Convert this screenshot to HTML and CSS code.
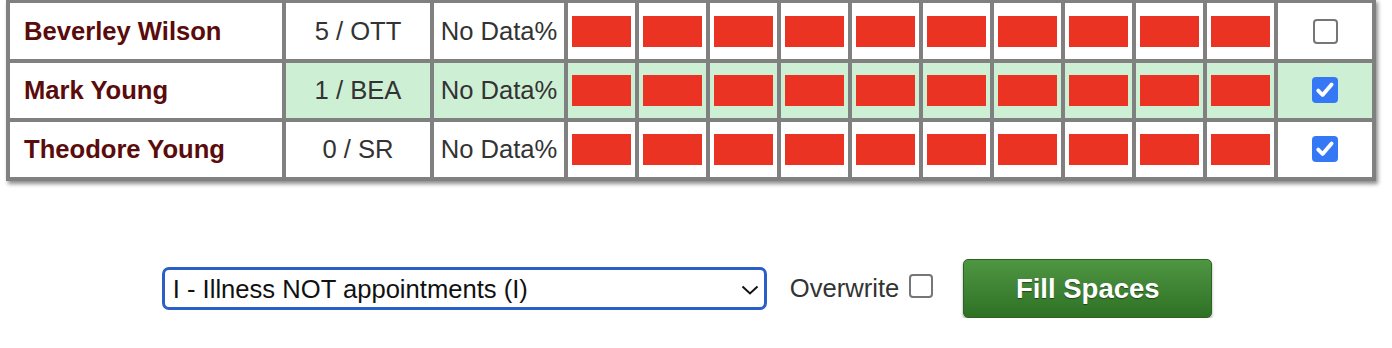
FILE: index.html
```html
<!DOCTYPE html>
<html>
<head>
<meta charset="utf-8">
<link rel="stylesheet" href="styles.css">
</head>
<body>
<div class="wrap">
<table class="grid">
  <colgroup>
    <col class="c-name"><col class="c-code"><col class="c-pct">
    <col class="c-day"><col class="c-day"><col class="c-day"><col class="c-day"><col class="c-day">
    <col class="c-day"><col class="c-day"><col class="c-day"><col class="c-day"><col class="c-day">
    <col class="c-chk">
  </colgroup>
  <tr class="r1">
    <td class="name">Beverley Wilson</td>
    <td class="code">5 / OTT</td>
    <td class="pct">No Data%</td>
    <td class="day"><div class="bar"></div></td>
    <td class="day"><div class="bar"></div></td>
    <td class="day"><div class="bar"></div></td>
    <td class="day"><div class="bar"></div></td>
    <td class="day"><div class="bar"></div></td>
    <td class="day"><div class="bar"></div></td>
    <td class="day"><div class="bar"></div></td>
    <td class="day"><div class="bar"></div></td>
    <td class="day"><div class="bar"></div></td>
    <td class="day"><div class="bar"></div></td>
    <td class="chk"><span class="box"></span></td>
  </tr>
  <tr class="r2 sel">
    <td class="name">Mark Young</td>
    <td class="code">1 / BEA</td>
    <td class="pct">No Data%</td>
    <td class="day"><div class="bar"></div></td>
    <td class="day"><div class="bar"></div></td>
    <td class="day"><div class="bar"></div></td>
    <td class="day"><div class="bar"></div></td>
    <td class="day"><div class="bar"></div></td>
    <td class="day"><div class="bar"></div></td>
    <td class="day"><div class="bar"></div></td>
    <td class="day"><div class="bar"></div></td>
    <td class="day"><div class="bar"></div></td>
    <td class="day"><div class="bar"></div></td>
    <td class="chk"><span class="box on"><svg viewBox="0 0 26 26" width="26" height="26"><path d="M6.2 13.6 L10.6 18 L19.6 7.4" fill="none" stroke="#fff" stroke-width="3.8" stroke-linecap="round" stroke-linejoin="round"/></svg></span></td>
  </tr>
  <tr class="r3">
    <td class="name">Theodore Young</td>
    <td class="code">0 / SR</td>
    <td class="pct">No Data%</td>
    <td class="day"><div class="bar"></div></td>
    <td class="day"><div class="bar"></div></td>
    <td class="day"><div class="bar"></div></td>
    <td class="day"><div class="bar"></div></td>
    <td class="day"><div class="bar"></div></td>
    <td class="day"><div class="bar"></div></td>
    <td class="day"><div class="bar"></div></td>
    <td class="day"><div class="bar"></div></td>
    <td class="day"><div class="bar"></div></td>
    <td class="day"><div class="bar"></div></td>
    <td class="chk"><span class="box on"><svg viewBox="0 0 26 26" width="26" height="26"><path d="M6.2 13.6 L10.6 18 L19.6 7.4" fill="none" stroke="#fff" stroke-width="3.8" stroke-linecap="round" stroke-linejoin="round"/></svg></span></td>
  </tr>
</table>
</div>

<div class="controls">
  <div class="select-wrap">
    <select class="reason">
      <option>I - Illness NOT appointments (I)</option>
    </select>
    <svg class="chev" viewBox="0 0 18 10" width="18" height="10"><path d="M1.5 1.5 L9 8.5 L16.5 1.5" fill="none" stroke="#111" stroke-width="2"/></svg>
  </div>
  <span class="ow-label">Overwrite</span>
  <span class="box small"></span>
  <button class="fill">Fill Spaces</button>
</div>
</body>
</html>
```

FILE: styles.css
```css
html, body {
  margin: 0;
  padding: 0;
  background: #ffffff;
  font-family: "Liberation Sans", Arial, sans-serif;
}

.wrap {
  padding-left: 6px;
}

.grid {
  margin-top: -1px;
  table-layout: fixed;
  width: 1370px;
  border-collapse: separate;
  border-spacing: 4px;
  background: #808080;
  box-shadow: 2px 3px 4px rgba(0, 0, 0, 0.45);
  font-size: 25.6px;
}

.c-name { width: 272px; }
.c-code { width: 144px; }
.c-pct { width: 130px; }
.c-day { width: 67px; }
.c-chk { width: 94px; }

.grid td {
  background: #ffffff;
  padding: 0;
  vertical-align: middle;
  color: #333333;
}

.r1 td { height: 56px; }
.r2 td, .r3 td { height: 55px; }

.sel td { background: #cdf0d5; }
.sel td.name { background: #ffffff; }

.grid td.name {
  padding-left: 14px;
  font-weight: bold;
  color: #5a0b0b;
  white-space: nowrap;
}

.grid td.code, .grid td.pct {
  text-align: center;
  white-space: nowrap;
}

.bar {
  width: 59px;
  height: 31px;
  margin: 0 auto;
  background: #ea3323;
}

.grid td.chk {
  text-align: center;
  line-height: 0;
}

.box {
  display: inline-block;
  box-sizing: border-box;
  width: 25px;
  height: 25px;
  border: 2px solid #767676;
  border-radius: 4px;
  background: #ffffff;
  vertical-align: middle;
}

.box.on {
  width: 26px;
  height: 26px;
  border: none;
  background: #3478f6;
  margin-top: -2px;
}

.box.on svg {
  display: block;
}

.controls {
  display: flex;
  align-items: center;
  justify-content: center;
  margin-top: 78px;
  padding-right: 18px;
}

.select-wrap {
  position: relative;
  width: 605px;
  height: 43px;
}

.reason {
  appearance: none;
  -webkit-appearance: none;
  box-sizing: border-box;
  width: 605px;
  height: 43px;
  margin: 0;
  border: 3px solid #2a5ec8;
  border-radius: 7px;
  background: #ffffff;
  padding: 0 0 0 8px;
  font-family: "Liberation Sans", Arial, sans-serif;
  font-size: 25.6px;
  color: #111111;
  outline: none;
}

.chev {
  position: absolute;
  right: 8px;
  top: 18px;
  pointer-events: none;
}

.ow-label {
  margin-left: 23px;
  font-size: 25.6px;
  color: #333333;
}

.box.small {
  width: 24px;
  height: 24px;
  margin-left: 10px;
  margin-bottom: 5px;
}

.fill {
  margin-left: 30px;
  box-sizing: border-box;
  width: 249px;
  height: 59px;
  border: 1px solid #2b6420;
  border-radius: 5px;
  background: linear-gradient(#4f9643, #2e7125);
  box-shadow: 0 2px 3px rgba(0, 0, 0, 0.35);
  color: #ffffff;
  font-family: "Liberation Sans", Arial, sans-serif;
  font-weight: bold;
  font-size: 27.5px;
  text-shadow: 0 1px 1px rgba(0, 0, 0, 0.45);
  padding: 0;
  cursor: pointer;
}
```
